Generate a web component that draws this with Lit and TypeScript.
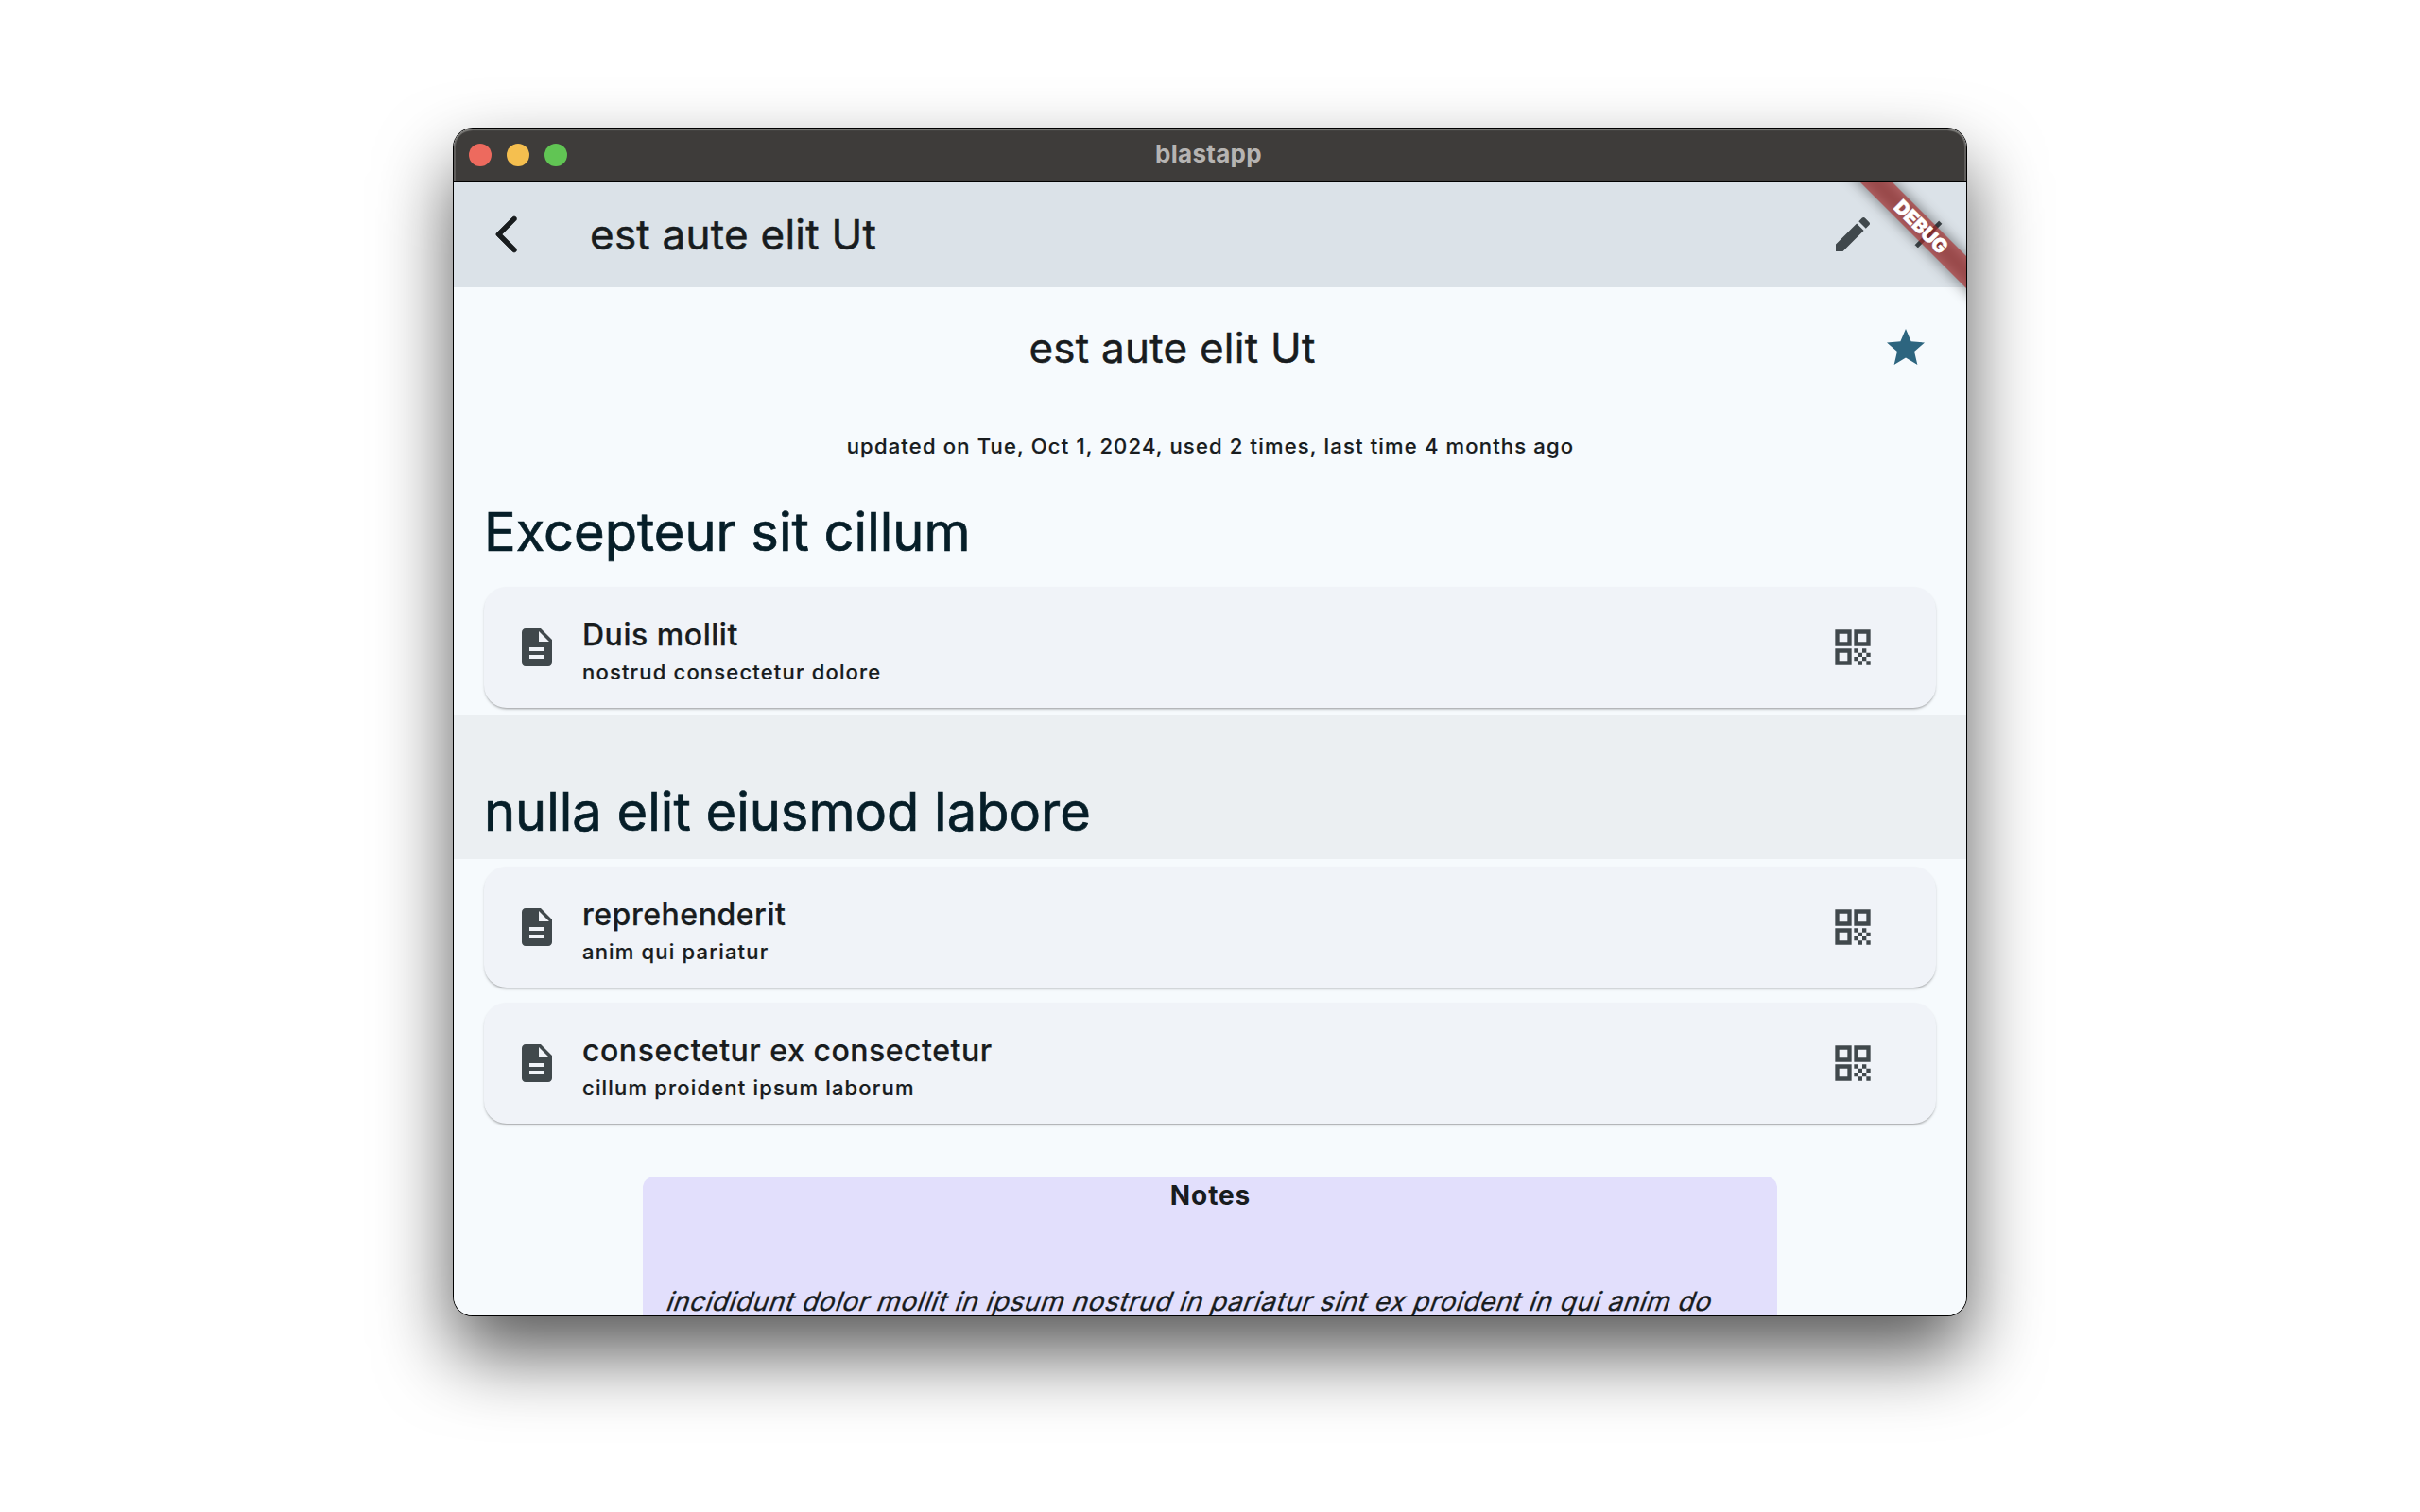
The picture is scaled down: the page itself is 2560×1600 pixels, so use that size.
import { LitElement, html, css, svg } from "lit";
import { customElement, property } from "lit/decorators.js";

const paths = {
  back: "M16.88 2.88c-.49-.49-1.28-.49-1.77 0L6.7 11.29c-.39.39-.39 1.02 0 1.41l8.41 8.41c.49.49 1.28.49 1.77 0s.49-1.28 0-1.77L9.54 12l7.35-7.35c.48-.49.48-1.28-.01-1.77z",
  edit: "M3 17.25V21h3.75L17.81 9.94l-3.75-3.75L3 17.25zM20.71 7.04c.39-.39.39-1.02 0-1.41l-2.34-2.34c-.39-.39-1.02-.39-1.41 0l-1.83 1.83 3.75 3.75 1.83-1.83z",
  close: "M19 6.41L17.59 5 12 10.59 6.41 5 5 6.41 10.59 12 5 17.59 6.41 19 12 13.41 17.59 19 19 17.59 13.41 12z",
  star: "M12 17.27L18.18 21l-1.64-7.03L22 9.24l-7.19-.61L12 2 9.19 8.63 2 9.24l5.46 4.73L5.82 21z",
  doc: "M14 2H6c-1.1 0-1.99.9-1.99 2L4 20c0 1.1.89 2 1.99 2H18c1.1 0 2-.9 2-2V8l-6-6zm2 16H8v-2h8v2zm0-4H8v-2h8v2zm-3-5V3.5L18.5 9H13z",
  qr: "M2.67 2.67H11.33V11.33H2.67zM4.83 4.83V9.17H9.17V4.83zM12.67 2.67H21.33V11.33H12.67zM14.83 4.83V9.17H19.17V4.83zM2.67 12.67H11.33V21.33H2.67zM4.83 14.83V19.17H9.17V14.83zM12.67 12.67h2.17v2.17h-2.17zM17 12.67h2.17v2.17H17zM14.83 14.83H17V17h-2.17zM19.17 14.83h2.17V17h-2.17zM12.67 17h2.17v2.17h-2.17zM17 17h2.17v2.17H17zM14.83 19.17H17v2.17h-2.17zM19.17 19.17h2.17v2.17h-2.17z",
};

@customElement("app-icon")
class AppIcon extends LitElement {
  @property() name: keyof typeof paths = "doc";

  static styles = css`
    :host { display: block; width: 48px; height: 48px; flex: none; }
    svg { display: block; width: 100%; height: 100%; fill: currentColor; }
    .bold { stroke: currentColor; stroke-width: 0.35; }
  `;

  render() {
    const bold = this.name === "back" || this.name === "close" ? "bold" : "";
    return html`<svg viewBox="0 0 24 24" class=${bold}>${svg`<path fill-rule="evenodd" d=${paths[this.name]}></path>`}</svg>`;
  }
}

@customElement("entry-card")
class EntryCard extends LitElement {
  @property() heading = "";
  @property() detail = "";

  static styles = css`
    :host {
      display: flex;
      align-items: center;
      box-sizing: border-box;
      height: 128px;
      margin: 8px 32px;
      padding: 0 64px 0 32px;
      gap: 24px;
      border-radius: 24px;
      background: #f0f3f8;
      color: #40484c;
      box-shadow: 0 2px 2px -1px rgba(0, 0, 0, 0.24), 0 2px 3px rgba(0, 0, 0, 0.13);
    }
    .text { flex: 1; color: #181c1e; font-weight: 500; padding-top: 4px; }
    .heading { font-size: 32px; line-height: 48px; letter-spacing: 0.53px; -webkit-text-stroke: 0.25px; }
    .detail { font-size: 22px; line-height: 30px; letter-spacing: 1.18px; -webkit-text-stroke: 0.2px; }
  `;

  render() {
    return html`
      <app-icon name="doc"></app-icon>
      <div class="text">
        <div class="heading">${this.heading}</div>
        <div class="detail">${this.detail}</div>
      </div>
      <app-icon name="qr"></app-icon>
    `;
  }
}

@customElement("app-root")
class AppRoot extends LitElement {
  static styles = css`
    :host {
      display: flex;
      align-items: flex-start;
      justify-content: center;
      box-sizing: border-box;
      width: 2560px;
      height: 1600px;
      padding-top: 136px;
      overflow: hidden;
      background: #fff;
      color: #181c1e;
      font-family: Inter, "Liberation Sans", sans-serif;
      white-space: nowrap;
    }
    .window {
      width: 1600px;
      height: 1256px;
      border-radius: 20px;
      box-shadow: 0 0 0 1px #000, 0 40px 80px rgba(0, 0, 0, 0.66);
    }
    .clip {
      display: flex;
      flex-direction: column;
      height: 100%;
      border-radius: 20px;
      overflow: hidden;
      background: #f6fafd;
    }
    .titlebar {
      display: grid;
      grid-template-columns: 1fr auto 1fr;
      align-items: center;
      box-sizing: border-box;
      height: 57px;
      flex: none;
      padding: 0 16px;
      border-bottom: 1px solid #000;
      border-radius: 20px 20px 0 0;
      background: #3e3c3a;
      box-shadow: inset 0 2px 1px #7b7a77, inset 2px 0 0 #5f5d5b, inset -2px 0 0 #5f5d5b;
    }
    .lights { display: flex; gap: 16px; }
    .light { width: 24px; height: 24px; border-radius: 50%; }
    .red { background: #ed6a5e; }
    .yellow { background: #f5bf4f; }
    .green { background: #61c554; }
    .name {
      color: #b6b4b2;
      font-size: 26px;
      font-weight: 700;
      line-height: 32px;
      letter-spacing: 0.3px;
      padding: 0 3px 3px 0;
    }
    .view { position: relative; flex: 1; overflow: hidden; }
    .appbar {
      display: flex;
      align-items: center;
      box-sizing: border-box;
      height: 111px;
      padding: 0 0 1px 32px;
      background: #dbe2e8;
    }
    .appbar .title { flex: 1; padding: 0 0 1px 64px; }
    .title { font-size: 44px; line-height: 56px; letter-spacing: 0.24px; -webkit-text-stroke: 0.5px; }
    .action {
      display: flex;
      align-items: center;
      justify-content: center;
      width: 80px;
      height: 80px;
      color: #40484c;
    }
    .header {
      display: flex;
      align-items: center;
      height: 128px;
      padding: 0 24px;
    }
    .header .title { flex: 1; text-align: center; }
    .header .action { color: #2d657f; }
    .meta {
      text-align: center;
      font-size: 22px;
      font-weight: 500;
      line-height: 80px;
      letter-spacing: 1.18px;
      padding-left: 1px;
      -webkit-text-stroke: 0.2px;
    }
    .section {
      height: 101px;
      padding: 0 32px;
      color: #061e28;
      font-size: 56px;
      line-height: 103px;
      letter-spacing: 0.01px;
      -webkit-text-stroke: 0.7px;
    }
    .band { padding-top: 51px; background: #ebeff2; }
    .entries { display: flow-root; }
    .pair { display: flex; flex-direction: column; }
    .notes {
      box-sizing: border-box;
      width: 1200px;
      height: 400px;
      margin: 48px auto 0;
      padding: 0 24px;
      border-radius: 12px;
      background: #e2dffc;
      font-size: 28px;
      line-height: 40px;
    }
    .notes-title { text-align: center; font-weight: 700; letter-spacing: 0.9px; padding-left: 1px; }
    .notes-text {
      margin-top: 72px;
      letter-spacing: 0.55px;
      transform: skewX(-20deg);
      transform-origin: 0 28px;
      -webkit-text-stroke: 0.3px;
    }
    /* Corner ribbon, laid over the app bar */
    .ribbon, .ribbon-shade {
      position: absolute;
      top: 35px;
      right: -52px;
      width: 200px;
      height: 24px;
      transform: rotate(45deg);
    }
    .ribbon-shade { background: rgba(0, 0, 0, 0.5); filter: blur(7.5px); }
    .ribbon {
      background: rgba(174, 46, 46, 0.63);
      color: #fff;
      font-size: 20.4px;
      font-weight: 900;
      line-height: 23px;
      letter-spacing: -0.2px;
      text-align: center;
      -webkit-text-stroke: 0.5px;
    }
  `;

  render() {
    return html`
      <div class="window">
        <div class="clip">
          <div class="titlebar">
            <div class="lights">
              <div class="light red"></div>
              <div class="light yellow"></div>
              <div class="light green"></div>
            </div>
            <div class="name">blastapp</div>
          </div>
          <div class="view">
            <div class="appbar">
              <app-icon name="back"></app-icon>
              <div class="title">est aute elit Ut</div>
              <div class="action"><app-icon name="edit"></app-icon></div>
              <div class="action"><app-icon name="close"></app-icon></div>
            </div>
            <div class="header">
              <div class="title">est aute elit Ut</div>
              <div class="action"><app-icon name="star"></app-icon></div>
            </div>
            <div class="meta">updated on Tue, Oct 1, 2024, used 2 times, last time 4 months ago</div>
            <div class="section">Excepteur sit cillum</div>
            <div class="entries">
              <entry-card heading="Duis mollit" detail="nostrud consectetur dolore"></entry-card>
            </div>
            <div class="section band">nulla elit eiusmod labore</div>
            <div class="pair">
              <entry-card heading="reprehenderit" detail="anim qui pariatur"></entry-card>
              <entry-card heading="consectetur ex consectetur" detail="cillum proident ipsum laborum"></entry-card>
            </div>
            <div class="notes">
              <div class="notes-title">Notes</div>
              <div class="notes-text">incididunt dolor mollit in ipsum nostrud in pariatur sint ex proident in qui anim do</div>
            </div>
            <div class="ribbon-shade"></div>
            <div class="ribbon">DEBUG</div>
          </div>
        </div>
      </div>
    `;
  }
}
